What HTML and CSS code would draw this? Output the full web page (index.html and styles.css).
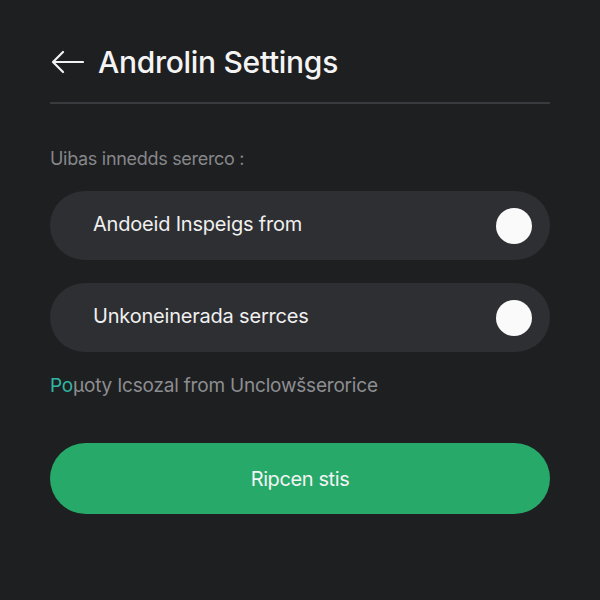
FILE: index.html
```html
<!DOCTYPE html>
<html lang="en">
<head>
  <meta charset="UTF-8">
  <title>Androlin Settings</title>
  <meta name="viewport" content="width=device-width, initial-scale=1.0">
  <link rel="stylesheet" href="styles.css">
</head>
<body>
  <div class="screen">
    <div class="top-bar">
      <svg class="back-arrow" width="34" height="24" viewBox="0 0 34 24">
        <path d="M33 12H3M13 2L3 12l10 10" fill="none" stroke="#f2f2f2" stroke-width="2.2" stroke-linecap="round" stroke-linejoin="round"/>
      </svg>
      <h1 class="title">Androlin Settings</h1>
    </div>
    <div class="divider"></div>
    <div class="section-label">Uibas innedds sererco :</div>
    <div class="toggle-row">
      <span class="toggle-text">Andoeid Inspeigs from</span>
      <span class="knob"></span>
    </div>
    <div class="toggle-row">
      <span class="toggle-text">Unkoneinerada serrces</span>
      <span class="knob"></span>
    </div>
    <div class="footnote"><span class="accent">Po</span>µoty Icsozal from Unclowšserorice</div>
    <button class="main-btn">Ripcen stis</button>
  </div>
</body>
</html>
```

FILE: styles.css
```css
body {
  margin: 0;
  padding: 0;
  background: #1e1f21;
  font-family: Inter, Roboto, 'Noto Sans', sans-serif;
  color: #f2f2f2;
}
.screen {
  padding: 40px 50px;
  display: flex;
  flex-direction: column;
}
.top-bar {
  display: flex;
  align-items: center;
  gap: 14px;
  height: 44px;
}
.back-arrow {
  flex: none;
}
.title {
  margin: 0;
  font-size: 30px;
  font-weight: 500;
  letter-spacing: -0.3px;
  color: #f4f4f4;
}
.divider {
  margin-top: 18px;
  height: 2px;
  background: #3a3b3e;
}
.section-label {
  margin-top: 44px;
  font-size: 18px;
  line-height: 22px;
  color: #86878a;
  letter-spacing: -0.3px;
}
.toggle-row {
  margin-top: 21px;
  height: 69px;
  border-radius: 35px;
  background: #2e2f32;
  display: flex;
  align-items: center;
  justify-content: space-between;
  padding: 0 18px 0 43px;
}
.toggle-row + .toggle-row {
  margin-top: 23px;
}
.toggle-text {
  font-size: 20px;
  color: #f0f0f0;
  letter-spacing: -0.2px;
  margin-bottom: 3px;
}
.knob {
  width: 36px;
  height: 36px;
  border-radius: 50%;
  background: #fafafa;
}
.footnote {
  margin-top: 23px;
  font-size: 19px;
  line-height: 22px;
  color: #8d8e91;
  letter-spacing: -0.2px;
}
.accent {
  color: #2fb8a4;
}
.main-btn {
  margin-top: 46px;
  height: 71px;
  border: none;
  border-radius: 36px;
  background: #27a96a;
  color: #f4f4f4;
  font-family: inherit;
  font-size: 20px;
  letter-spacing: -0.4px;
}
```
